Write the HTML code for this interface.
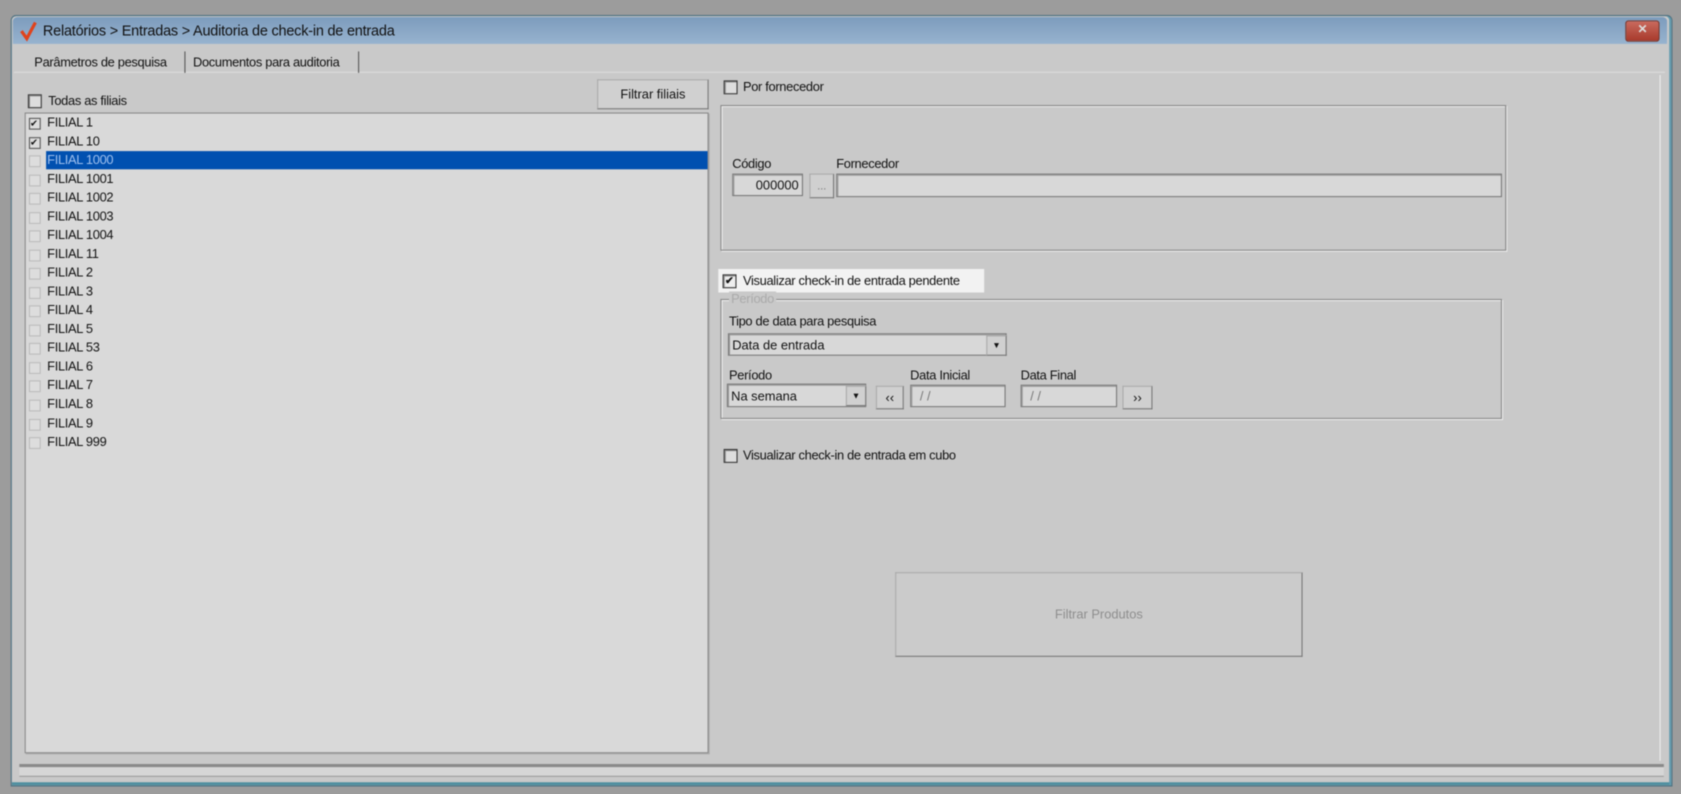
<!DOCTYPE html>
<html><head><meta charset="utf-8"><style>
html,body{margin:0;padding:0;width:1681px;height:794px;overflow:hidden;background:#9c9c9c}
#s{position:absolute;left:0;top:0;width:1568px;height:741px;transform:scale(1.07207,1.07152);transform-origin:0 0;font-family:"Liberation Sans",sans-serif;font-size:12px;color:#111;filter:blur(0.6px)}
.a{position:absolute}
.t{position:absolute;white-space:nowrap;line-height:14px;letter-spacing:-0.3px}
.cb{position:absolute;width:11px;height:11px;border:1px solid #333;background:#ddd;box-shadow:inset 1px 1px 0 #888}
.in{position:absolute;background:#d8d8d8;border:1px solid #777;box-shadow:inset 1px 1px 0 #999}
.bt{position:absolute;background:#d0d0d0;border:1px solid #aaa;border-right-color:#777;border-bottom-color:#777;text-align:center}
.gb{position:absolute;border:1px solid #888;box-shadow:1px 1px 0 #eee inset,1px 1px 0 #eee}
.li{position:absolute;left:20px;height:17px;line-height:17px;white-space:nowrap;letter-spacing:-0.3px}
.lc{position:absolute;left:3px;top:4px;width:9px;height:9px;border:1px solid #bbb;background:#ddd}
</style></head><body><div id="s">
<div class="a" style="left:10px;top:14px;width:1548px;height:718px;background:#c9c9c9;border:1px solid #4a6f80;border-radius:5px 5px 0 0;box-shadow:inset -2px 0 0 #5f9aae,inset 0 -3px 0 #4f8fa0"></div>
<div class="a" style="left:12px;top:16px;width:1543px;height:25px;background:linear-gradient(#7d9cbd,#97b3cf);border-radius:4px 4px 0 0"></div>
<svg class="a" style="left:18px;top:19px" width="18" height="20"><path d="M2 10 L7 17 L15 2" stroke="#e0431c" stroke-width="3" fill="none"/></svg>
<div class="t" style="left:40px;top:22px;font-size:13.5px;letter-spacing:-0.2px">Relatórios &gt; Entradas &gt; Auditoria de check-in de entrada</div>
<div class="a" style="left:1516px;top:19px;width:30px;height:18px;background:linear-gradient(#c96a5e,#a83a2c);border:1px solid #7a3a30;border-radius:3px;color:#ddd;text-align:center;font-weight:bold;line-height:17px;font-size:11px">✕</div>
<div class="a" style="left:13px;top:67px;width:1540px;height:1px;background:#ddd"></div>
<div class="t" style="left:32px;top:51px">Parâmetros de pesquisa</div>
<div class="a" style="left:172px;top:48px;width:1px;height:20px;background:#555"></div>
<div class="t" style="left:180px;top:51px">Documentos para auditoria</div>
<div class="a" style="left:334px;top:48px;width:1px;height:20px;background:#555"></div>
<div class="a" style="left:1548px;top:70px;width:1px;height:640px;background:#eee"></div>
<div class="cb" style="left:26px;top:88px"></div>
<div class="t" style="left:45px;top:87px">Todas as filiais</div>
<div class="bt" style="left:557px;top:74px;width:102px;height:26px;line-height:26px">Filtrar filiais</div>
<div class="a" style="left:23px;top:105px;width:636px;height:596px;background:#d9d9d9;border:1px solid #888;box-shadow:1px 1px 0 #aaa">
<div class="a" style="left:19px;top:35px;width:617px;height:17px;background:#0050b0"></div>
<div class="li" style="top:0"><span class="lc" style="left:-17px;border-color:#555;background:#ddd;font-size:9px;line-height:9px">✔</span>FILIAL 1</div>
<div class="li" style="top:17.5px"><span class="lc" style="left:-17px;border-color:#555;font-size:9px;line-height:9px">✔</span>FILIAL 10</div>
<div class="li" style="top:35px;color:#9fc0ee"><span class="lc" style="left:-17px"></span>FILIAL 1000</div>
<div class="li" style="top:52.6px"><span class="lc" style="left:-17px"></span>FILIAL 1001</div>
<div class="li" style="top:70.1px"><span class="lc" style="left:-17px"></span>FILIAL 1002</div>
<div class="li" style="top:87.6px"><span class="lc" style="left:-17px"></span>FILIAL 1003</div>
<div class="li" style="top:105.2px"><span class="lc" style="left:-17px"></span>FILIAL 1004</div>
<div class="li" style="top:122.7px"><span class="lc" style="left:-17px"></span>FILIAL 11</div>
<div class="li" style="top:140.2px"><span class="lc" style="left:-17px"></span>FILIAL 2</div>
<div class="li" style="top:157.8px"><span class="lc" style="left:-17px"></span>FILIAL 3</div>
<div class="li" style="top:175.3px"><span class="lc" style="left:-17px"></span>FILIAL 4</div>
<div class="li" style="top:192.8px"><span class="lc" style="left:-17px"></span>FILIAL 5</div>
<div class="li" style="top:210.4px"><span class="lc" style="left:-17px"></span>FILIAL 53</div>
<div class="li" style="top:227.9px"><span class="lc" style="left:-17px"></span>FILIAL 6</div>
<div class="li" style="top:245.4px"><span class="lc" style="left:-17px"></span>FILIAL 7</div>
<div class="li" style="top:263px"><span class="lc" style="left:-17px"></span>FILIAL 8</div>
<div class="li" style="top:280.5px"><span class="lc" style="left:-17px"></span>FILIAL 9</div>
<div class="li" style="top:298px"><span class="lc" style="left:-17px"></span>FILIAL 999</div>
</div>
<div class="cb" style="left:675px;top:75px"></div>
<div class="t" style="left:693px;top:74px">Por fornecedor</div>
<div class="gb" style="left:672px;top:98px;width:731px;height:134px"></div>
<div class="t" style="left:683px;top:146px">Código</div>
<div class="t" style="left:780px;top:146px">Fornecedor</div>
<div class="in" style="left:683px;top:162px;width:66px;height:21px;text-align:right;line-height:21px;box-sizing:border-box;padding-right:3px">000000</div>
<div class="bt" style="left:755px;top:162px;width:21px;height:21px;line-height:24px;font-size:10px;color:#777">...</div>
<div class="in" style="left:780px;top:162px;width:619px;height:20px"></div>
<div class="a" style="left:670px;top:251px;width:248px;height:22px;background:#f2f2f2"></div>
<div class="cb" style="left:674px;top:256px;background:#eee;font-size:10px;line-height:11px;text-align:center;font-weight:bold">✔</div>
<div class="t" style="left:693px;top:255px">Visualizar check-in de entrada pendente</div>
<div class="gb" style="left:672px;top:279px;width:727px;height:110px"></div>
<div class="t" style="left:680px;top:272px;color:#aaa;background:#c9c9c9;padding:0 2px">Período</div>
<div class="t" style="left:680px;top:293px">Tipo de data para pesquisa</div>
<div class="in" style="left:679px;top:311px;width:260px;height:21px;line-height:21px;padding-left:3px;box-sizing:border-box">Data de entrada</div>
<div class="bt" style="left:920px;top:313px;width:17px;height:17px;line-height:17px;font-size:8px">▼</div>
<div class="t" style="left:680px;top:343px">Período</div>
<div class="t" style="left:849px;top:343px">Data Inicial</div>
<div class="t" style="left:952px;top:343px">Data Final</div>
<div class="in" style="left:678px;top:358px;width:130px;height:22px;line-height:22px;padding-left:3px;box-sizing:border-box">Na semana</div>
<div class="bt" style="left:789px;top:360px;width:17px;height:17px;line-height:17px;font-size:8px">▼</div>
<div class="bt" style="left:817px;top:360px;width:24px;height:20px;line-height:20px">‹‹</div>
<div class="in" style="left:849px;top:359px;width:89px;height:21px;line-height:21px;padding-left:8px;box-sizing:border-box;color:#777">/ /</div>
<div class="in" style="left:952px;top:359px;width:90px;height:21px;line-height:21px;padding-left:8px;box-sizing:border-box;color:#777">/ /</div>
<div class="bt" style="left:1047px;top:360px;width:26px;height:20px;line-height:20px">››</div>
<div class="cb" style="left:675px;top:419px"></div>
<div class="t" style="left:693px;top:418px">Visualizar check-in de entrada em cubo</div>
<div class="bt" style="left:835px;top:534px;width:378px;height:77px;line-height:77px;color:#8e8e8e;background:#cbcbcb">Filtrar Produtos</div>
<div class="a" style="left:18px;top:713px;width:1534px;height:3px;background:#8a8a8a"></div>
<div class="a" style="left:18px;top:716px;width:1534px;height:8px;background:#d6d6d6;border-bottom:1px solid #999"></div>
</div></body></html>
